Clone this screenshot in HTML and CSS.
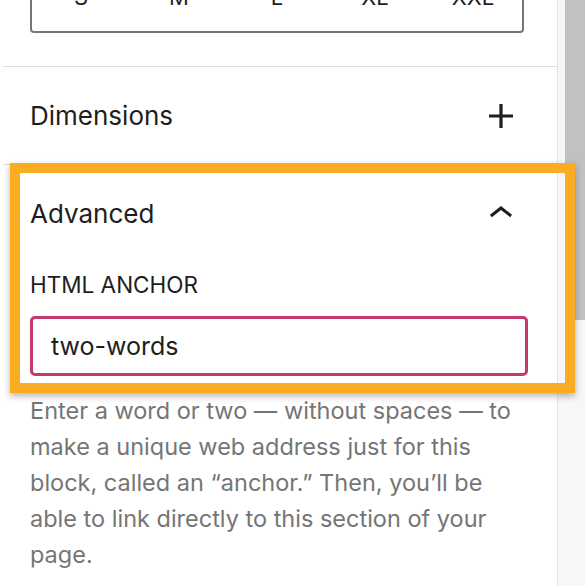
FILE: index.html
```html
<!DOCTYPE html>
<html lang="en">
<head>
    <meta charset="UTF-8">
    <meta name="viewport" content="width=device-width, initial-scale=1.0">
    <title>Block Settings - Advanced</title>
    <link rel="stylesheet" href="styles.css">
</head>
<body>
    <div class="sidebar">
        <div class="panel">
            <div class="size-section">
                <div class="size-picker">
                    <span class="size-option">S</span>
                    <span class="size-option">M</span>
                    <span class="size-option">L</span>
                    <span class="size-option">XL</span>
                    <span class="size-option">XXL</span>
                </div>
            </div>

            <div class="section">
                <div class="section-header">
                    <h2 class="section-title">Dimensions</h2>
                    <button class="icon-btn" aria-label="Show dimensions">
                        <svg viewBox="0 0 24 24" width="48" height="48">
                            <path d="M18 11.2h-5.2V6h-1.6v5.2H6v1.6h5.2V18h1.6v-5.2H18z"/>
                        </svg>
                    </button>
                </div>
            </div>

            <div class="section advanced">
                <div class="highlight"></div>
                <div class="section-header">
                    <h2 class="section-title">Advanced</h2>
                    <button class="icon-btn" aria-label="Hide advanced">
                        <svg viewBox="0 0 24 24" width="48" height="48">
                            <path d="M6.5 12.4L12 8l5.5 4.4-.9 1.2L12 10l-4.6 3.6-1-1.2z"/>
                        </svg>
                    </button>
                </div>
                <label class="field-label" for="anchor">HTML ANCHOR</label>
                <input class="field-input" id="anchor" type="text" value="two-words">
                <p class="help-text">Enter a word or two — without spaces — to make a unique web address just for this block, called an “anchor.” Then, you’ll be able to link directly to this section of your page.</p>
            </div>
        </div>
        <div class="scrollbar">
            <div class="scrollbar-thumb"></div>
        </div>
    </div>
</body>
</html>
```

FILE: styles.css
```css
body {
    margin: 0;
    padding: 0;
    background-color: white;
    font-family: "Inter", "Noto Sans", sans-serif;
    color: #1e1e1e;
    overflow: hidden;
}

.sidebar {
    display: flex;
    flex-direction: row;
    height: 586px;
}

.panel {
    width: 557px;
    border-right: 1px solid #e4e4e4;
    background-color: white;
}

.size-section {
    margin-left: 3px;
    padding: 0 33px 33px 27px;
}

.size-picker {
    display: flex;
    align-items: center;
    height: 72px;
    margin-top: -39px;
    border: 2px solid #767676;
    border-radius: 4px;
    box-sizing: border-box;
}

.size-option {
    flex: 1;
    text-align: center;
    font-size: 22px;
    color: #1e1e1e;
}

.section {
    margin-left: 3px;
    padding: 0 0 0 27px;
    border-top: 1px solid #dddddd;
    position: relative;
}

.section-header {
    display: flex;
    justify-content: space-between;
    align-items: center;
    height: 97px;
    padding-right: 32px;
}

.section-title {
    margin: 0;
    font-size: 26px;
    font-weight: 400;
}

.icon-btn {
    background: none;
    border: none;
    padding: 0;
    width: 48px;
    height: 48px;
    cursor: pointer;
}

.icon-btn svg {
    display: block;
    fill: #1e1e1e;
}

.field-label {
    display: block;
    margin-top: 12px;
    font-size: 22.5px;
    font-weight: 400;
    line-height: 22px;
}

.field-input {
    display: block;
    box-sizing: border-box;
    width: 498px;
    height: 60px;
    margin-top: 20px;
    padding: 0 18px;
    border: 3px solid #c23a70;
    border-radius: 5px;
    font-family: "Inter", "Noto Sans", sans-serif;
    font-size: 25px;
    color: #1e1e1e;
    outline: none;
}

.help-text {
    margin: 17px 0 0 0;
    padding-right: 40px;
    font-size: 23.5px;
    line-height: 36px;
    color: #757575;
}

/* orange callout drawn over the advanced panel */
.highlight {
    position: absolute;
    top: -2px;
    left: 7px;
    width: 565px;
    height: 230px;
    box-sizing: border-box;
    border: 10px solid #fbad21;
    box-shadow: 0 3px 7px rgba(0, 0, 0, 0.3);
    pointer-events: none;
}

.scrollbar {
    flex: 1;
    display: flex;
    justify-content: flex-end;
    background-color: #f7f7f7;
}

.scrollbar-thumb {
    width: 20px;
    height: 320px;
    background-color: #c1c1c1;
}
```
